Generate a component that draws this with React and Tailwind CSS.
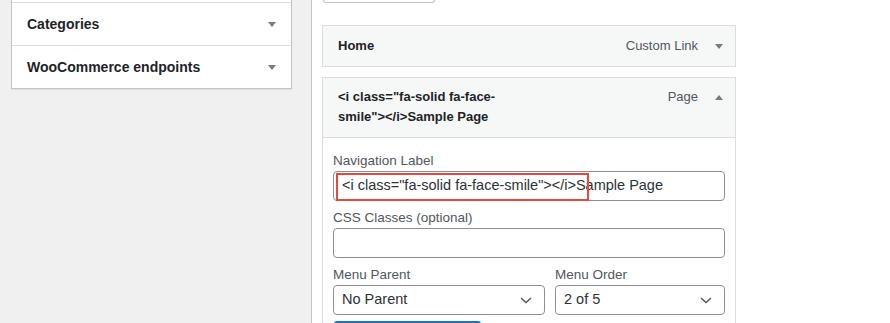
import React from 'react';

const font = { fontFamily: '"Liberation Sans", Arial, sans-serif' };

function Caret({ up = false }) {
  return (
    <svg width="8" height="5" viewBox="0 0 8 5" className="shrink-0">
      <path d={up ? 'M0 5L4 0L8 5Z' : 'M0 0L8 0L4 5Z'} fill="#787c82" />
    </svg>
  );
}

function Chevron() {
  return (
    <svg width="12" height="7" viewBox="0 0 12 7" className="shrink-0">
      <path d="M1 1l5 4.5L11 1" fill="none" stroke="#50575e" strokeWidth="1.4" />
    </svg>
  );
}

function Field({ label, children, className = '' }) {
  return (
    <div className={`flex flex-col ${className}`}>
      <label className="text-[13.5px] leading-[18px] text-[#50575e] mb-[1px]">{label}</label>
      {children}
    </div>
  );
}

function Select({ value }) {
  return (
    <div className="h-[30px] border border-[#8c8f94] rounded-[4px] bg-white flex items-center pl-[8px] pr-[12px]">
      <span className="flex-1 text-[14.5px] text-[#2c3338]">{value}</span>
      <Chevron />
    </div>
  );
}

export default function App() {
  return (
    <div className="w-[890px] h-[323px] overflow-hidden bg-[#f0f0f1] flex items-start text-[#1d2327]" style={font}>
      {/* Left accordion */}
      <div className="w-[311px] pl-[11px] pr-[19px] shrink-0">
        <div className="bg-white border-x border-b border-[#c3c4c7] shadow-[0_1px_1px_rgba(0,0,0,0.06)]">
          <div className="h-[3px] border-b border-[#dcdcde]" />
          <div className="h-[43px] border-b border-[#dcdcde] flex items-center pl-[15px] pr-[15px]">
            <span className="flex-1 text-[14px] font-bold">Categories</span>
            <Caret />
          </div>
          <div className="h-[42px] flex items-center pl-[15px] pr-[15px]">
            <span className="flex-1 text-[14px] font-bold">WooCommerce endpoints</span>
            <Caret />
          </div>
        </div>
      </div>

      {/* Menu structure */}
      <div className="flex-1 self-stretch bg-white border-l border-[#c3c4c7] pl-[10px]">
        <div className="h-[3px] w-[112px] ml-[1px] border border-t-0 border-[#c3c4c7] rounded-b-[3px]" />

        <div className="w-[414px] mt-[22px] h-[42px] border border-[#dcdcde] bg-[#f6f7f7] flex items-center pl-[15px] pr-[12px]">
          <span className="flex-1 text-[13px] font-bold leading-[20px]">Home</span>
          <span className="text-[13px] text-[#50575e]">Custom Link</span>
          <span className="ml-[17px]"><Caret /></span>
        </div>

        <div className="w-[414px] mt-[10px]">
          <div className="border border-[#dcdcde] bg-[#f6f7f7] flex items-start pl-[15px] pr-[12px] pt-[9px] pb-[10px]">
            <div className="flex-1">
              <div className="w-[180px] text-[13px] font-bold leading-[20px]">
                {'<i class="fa-solid fa-face-smile"></i>Sample Page'}
              </div>
            </div>
            <div className="flex items-center h-[20px]">
              <span className="text-[13px] text-[#50575e]">Page</span>
              <span className="ml-[17px]"><Caret up /></span>
            </div>
          </div>

          <div className="border-x border-[#dcdcde] px-[10px] pt-[14px]">
            <Field label="Navigation Label">
              <div className="relative h-[30px] border border-[#8c8f94] rounded-[4px] flex items-center pl-[8px]">
                <span className="text-[14.5px] text-[#2c3338] whitespace-nowrap">
                  {'<i class="fa-solid fa-face-smile"></i>Sample Page'}
                </span>
                <div className="absolute left-[2px] top-[1px] w-[253px] h-[28px] border-2 border-[#e5483f]" />
              </div>
            </Field>

            <Field label="CSS Classes (optional)" className="mt-[8px]">
              <div className="h-[30px] border border-[#8c8f94] rounded-[4px]" />
            </Field>

            <div className="flex gap-[10px] mt-[8px]">
              <Field label="Menu Parent" className="w-[212px]">
                <Select value="No Parent" />
              </Field>
              <Field label="Menu Order" className="flex-1">
                <Select value="2 of 5" />
              </Field>
            </div>

            <div className="mt-[6px] ml-[1px] w-[147px] h-[30px] rounded-[3px] bg-[#2271b1]" />
          </div>
        </div>
      </div>
    </div>
  );
}
